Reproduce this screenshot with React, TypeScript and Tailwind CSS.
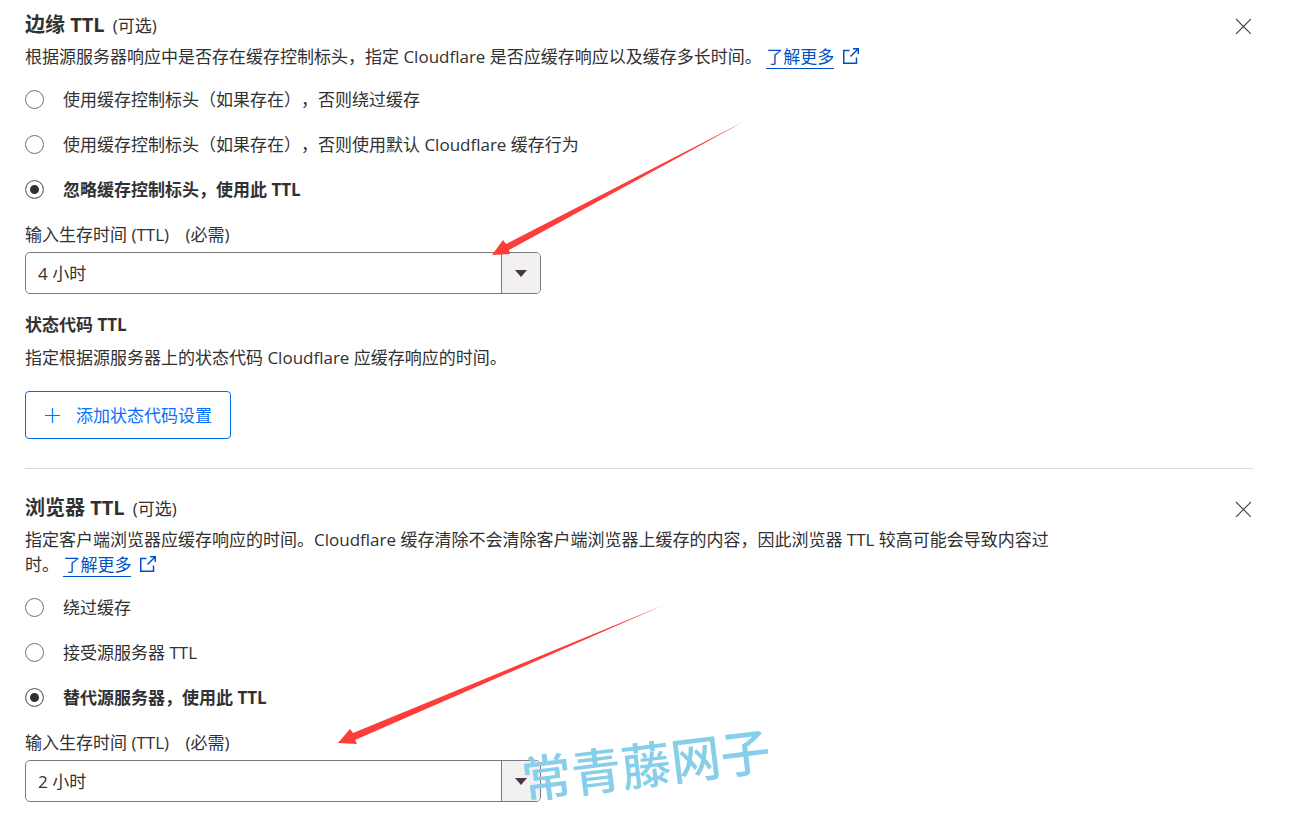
import React, { useState } from "react";

const EDGE_OPTIONS = [
  "使用缓存控制标头（如果存在），否则绕过缓存",
  "使用缓存控制标头（如果存在），否则使用默认 Cloudflare 缓存行为",
  "忽略缓存控制标头，使用此 TTL",
];

const BROWSER_OPTIONS = ["绕过缓存", "接受源服务器 TTL", "替代源服务器，使用此 TTL"];

const DURATIONS = ["30 分钟", "1 小时", "2 小时", "4 小时", "8 小时", "1 天"];

const ExternalIcon = () => (
  <svg className="ml-2 inline-block h-[18px] w-[18px] align-[-2px]" viewBox="0 0 18 18" fill="none" stroke="currentColor" strokeWidth="1.5" aria-hidden="true">
    <path d="M7.5 3.5H1.75v12.75H14.5V10.5" />
    <path d="M11 1.75h5.25V7M16 2L8.5 9.5" />
  </svg>
);

const LearnMore = () => (
  <a href="#learn-more" className="whitespace-nowrap text-[#0051c3]">
    <span className="border-b border-[#0051c3]">了解更多</span>
    <ExternalIcon />
  </a>
);

const SectionHeader = ({ title }: { title: string }) => (
  <div className="flex h-[26px] items-center justify-between">
    <h3 className="text-xl leading-[25px] font-bold">
      {title}
      <span className="ml-2 text-[17px] font-normal">(可选)</span>
    </h3>
    <button type="button" aria-label={`移除 ${title}`} className="flex h-6 w-5 items-center justify-center self-end">
      <svg className="h-4 w-4" viewBox="0 0 16 16" stroke="#4a3f4a" strokeWidth="1.1" aria-hidden="true">
        <path d="M1 1l15 15M16 1L1 16" />
      </svg>
    </button>
  </div>
);

type RadioListProps = {
  name: string;
  options: string[];
  value: number;
  onChange: (index: number) => void;
};

const RadioList = ({ name, options, value, onChange }: RadioListProps) => (
  <div role="radiogroup" className="mt-[18px] flex flex-col items-start gap-5">
    {options.map((option, i) => (
      <label key={option} className="flex items-center gap-[19px]">
        <input
          type="radio"
          name={name}
          checked={value === i}
          onChange={() => onChange(i)}
          className="h-[19px] w-[19px] shrink-0 appearance-none rounded-full border border-[#707070] bg-white checked:bg-[#313131] checked:shadow-[inset_0_0_0_4px_white]"
        />
        <span className={value === i ? "font-bold" : ""}>{option}</span>
      </label>
    ))}
  </div>
);

const TtlSelect = ({ id, initial }: { id: string; initial: string }) => {
  const [value, setValue] = useState(initial);

  return (
    <div className="mt-5 max-w-[516px]">
      <label htmlFor={id} className="block">
        输入生存时间 (TTL) <span className="ml-3">(必需)</span>
      </label>
      <div className="relative mt-[5px]">
        <select
          id={id}
          value={value}
          onChange={(e) => setValue(e.target.value)}
          className="block h-[42px] w-full appearance-none rounded-[5px] border border-[#797979] bg-white pr-12 pl-3"
        >
          {DURATIONS.map((d) => (
            <option key={d}>{d}</option>
          ))}
        </select>
        <span className="pointer-events-none absolute inset-y-px right-px flex w-[39px] items-center justify-center rounded-r-[4px] border-l border-[#797979] bg-[#f2f1f0]">
          <svg className="h-[7px] w-3" viewBox="0 0 12 7" fill="#4a3545" aria-hidden="true">
            <path d="M0 0h12L6 7z" />
          </svg>
        </span>
      </div>
    </div>
  );
};

export default function App() {
  const [edge, setEdge] = useState(2);
  const [browser, setBrowser] = useState(2);

  return (
    <main
      lang="zh-CN"
      className="relative overflow-x-hidden bg-white pt-3 pr-[39px] pb-[27px] pl-[25px] font-['Open_Sans','Noto_Sans_CJK_SC',sans-serif] text-[17px] leading-[25px] text-[#313131] [text-spacing-trim:space-all]"
    >
      <section>
        <SectionHeader title="边缘 TTL" />
        <p className="mt-1.5 max-w-[1040px]">
          根据源服务器响应中是否存在缓存控制标头，指定 Cloudflare 是否应缓存响应以及缓存多长时间。 <LearnMore />
        </p>
        <RadioList name="edge-ttl" options={EDGE_OPTIONS} value={edge} onChange={setEdge} />
        <TtlSelect id="edge-duration" initial="4 小时" />

        <h4 className="mt-[18px] font-bold">状态代码 TTL</h4>
        <p className="mt-2">指定根据源服务器上的状态代码 Cloudflare 应缓存响应的时间。</p>
        <button
          type="button"
          className="mt-[21px] flex h-12 items-center gap-4 rounded-[4px] border border-[#0070f3] px-[18px] text-[#086fff]"
        >
          <svg className="h-4 w-4" viewBox="0 0 16 16" stroke="currentColor" strokeWidth="1.2" aria-hidden="true">
            <path d="M8.5 1v15M1 8.5h15" />
          </svg>
          添加状态代码设置
        </button>
      </section>

      <hr className="mt-[29px] border-[#d9d9d9]" />

      <section className="mt-[26px]">
        <SectionHeader title="浏览器 TTL" />
        <p className="mt-1.5 max-w-[1040px]">
          指定客户端浏览器应缓存响应的时间。Cloudflare 缓存清除不会清除客户端浏览器上缓存的内容，因此浏览器 TTL 较高可能会导致内容过时。 <LearnMore />
        </p>
        <RadioList name="browser-ttl" options={BROWSER_OPTIONS} value={browser} onChange={setBrowser} />
        <TtlSelect id="browser-duration" initial="2 小时" />
      </section>

      {/* Annotations drawn over the form */}
      <svg className="pointer-events-none absolute top-[120px] left-[490px] h-[136px] w-[256px]" viewBox="0 0 256 136" fill="#fc3d39" aria-hidden="true">
        <path d="M2 135L13 120l3 4L255 1 19 130l1 4z" />
      </svg>
      <svg className="pointer-events-none absolute top-[604px] left-[337px] h-[142px] w-[328px]" viewBox="0 0 328 142" fill="#fc3d39" aria-hidden="true">
        <path d="M1 139L13 125l3 4L327 1 18 136l2 4z" />
      </svg>
      <div className="pointer-events-none absolute top-[740px] left-[521px] rotate-[-7deg] text-[50px] leading-[50px] font-medium whitespace-nowrap text-[#87ceeb]">
        常青藤网子
      </div>
    </main>
  );
}
